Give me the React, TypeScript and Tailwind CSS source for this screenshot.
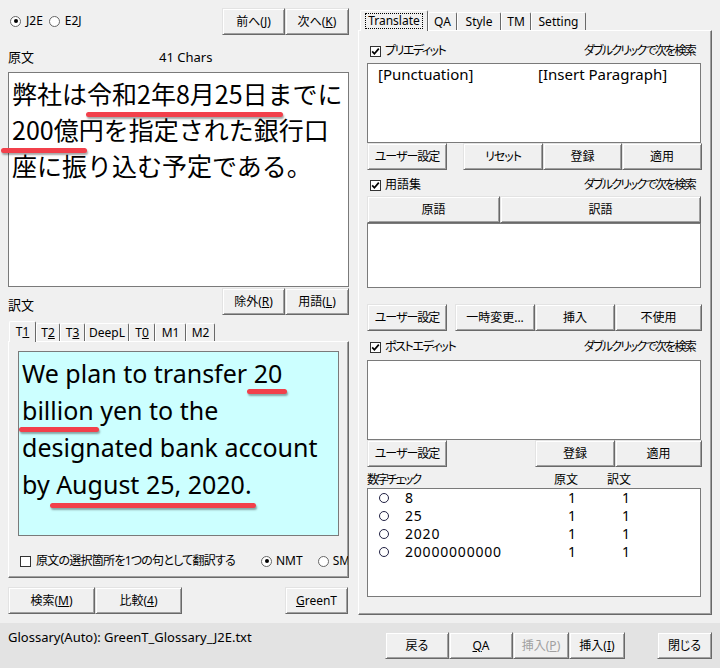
import React from 'react';

const ui = "font-['Noto_Sans','Noto_Sans_CJK_JP',sans-serif]";

type BtnProps = { className?: string; disabled?: boolean; children: React.ReactNode };

const Btn = ({ className = '', disabled = false, children }: BtnProps) => (
  <div
    className={`flex items-center justify-center h-[27px] shrink-0 bg-[#f0f0f0] border border-t-[#e3e3e3] border-l-[#e3e3e3] border-r-[#696969] border-b-[#696969] shadow-[inset_1px_1px_0_#ffffff,inset_-1px_-1px_0_#a0a0a0] text-[12px] leading-[16px] ${disabled ? 'text-[#a0a0a0]' : 'text-black'} ${className}`}
  >
    {children}
  </div>
);

const Check = ({ checked = false }: { checked?: boolean }) => (
  <span className="w-[11px] h-[11px] shrink-0 border border-[#333333] bg-white flex items-center justify-center">
    {checked && (
      <svg width="9" height="9" viewBox="0 0 9 9">
        <path d="M1.2 4.4 L3.4 6.8 L7.8 1.6" stroke="#000" strokeWidth="1.7" fill="none" />
      </svg>
    )}
  </span>
);

const Radio = ({ on = false }: { on?: boolean }) => (
  <span className="w-[11px] h-[11px] shrink-0 rounded-full border border-[#666666] bg-white flex items-center justify-center">
    {on && <span className="w-[4px] h-[4px] rounded-full bg-black" />}
  </span>
);

type TabProps = { active?: boolean; className?: string; children: React.ReactNode };

const Tab = ({ active = false, className = '', children }: TabProps) => (
  <div
    className={`flex items-center justify-center shrink-0 bg-[#f0f0f0] border-t border-l border-r border-t-white border-l-white border-r-[#696969] rounded-t-[2px] text-[12px] leading-[14px] ${
      active ? 'relative z-10 -mb-px h-[21px]' : 'h-[18px]'
    } ${className}`}
  >
    {children}
  </div>
);

const Mark = ({ className }: { className: string }) => (
  <div className={`absolute h-[5px] rounded-full bg-[#f2404b] shadow-[1px_2px_2px_rgba(0,0,0,0.35)] ${className}`} />
);

const panel =
  'bg-[#f0f0f0] border border-t-white border-l-white border-r-[#696969] border-b-[#696969] shadow-[inset_-1px_-1px_0_#a0a0a0]';

const counts = ['8', '25', '2020', '20000000000'];

const Hint = () => <span className="ml-auto mr-[7px] tracking-[-1.7px]">ダブルクリックで次を検索</span>;

export default function App() {
  return (
    <div className={`relative w-[720px] h-[668px] bg-[#f0f0f0] flex flex-col text-black ${ui} [font-feature-settings:'palt']`}>
      <div className="h-[623px] flex">
        {/* left column */}
        <div className="w-[352px] pl-[8px] pr-[3px] flex flex-col">
          <div className="mt-[8px] h-[27px] flex items-start">
            <div className="mt-[7px] h-[12px] flex items-center text-[12px]">
              <span className="ml-[2px]"><Radio on /></span>
              <span className="ml-[5px]">J2E</span>
              <span className="ml-[6px]"><Radio /></span>
              <span className="ml-[5px]">E2J</span>
            </div>
            <div className="ml-auto flex">
              <Btn className="w-[63px]">前へ(<u>J</u>)</Btn>
              <Btn className="w-[64px]">次へ(<u>K</u>)</Btn>
            </div>
          </div>

          <div className="mt-[14px] h-[16px] flex items-center text-[13px] leading-[16px]">
            <span className="w-[151px]">原文</span>
            <span>41 Chars</span>
          </div>

          <div className="mt-[7px] h-[215px] bg-white border border-[#7a7a7a] pl-[3px] pt-[2px] text-[25px] leading-[36px] font-['Noto_Sans_CJK_JP',sans-serif] [font-feature-settings:normal]">
            弊社は令和2年8月25日までに
            <br />
            200億円を指定された銀行口
            <br />
            座に振り込む予定である。
          </div>

          <div className="mt-[1px] h-[27px] flex items-end">
            <span className="mb-[2px] text-[13px] leading-[16px]">訳文</span>
            <div className="ml-auto flex">
              <Btn className="w-[63px]">除外(<u>R</u>)</Btn>
              <Btn className="w-[64px]">用語(<u>L</u>)</Btn>
            </div>
          </div>

          <div className="mt-[7px] h-[19px] pl-[1px] flex items-end">
            <Tab active className="w-[27px]">T<u>1</u></Tab>
            <Tab className="w-[24px]">T<u>2</u></Tab>
            <Tab className="w-[25px]">T<u>3</u></Tab>
            <Tab className="w-[44px]">DeepL</Tab>
            <Tab className="w-[26px]">T<u>0</u></Tab>
            <Tab className="w-[31px]">M1</Tab>
            <Tab className="w-[29px]">M2</Tab>
          </div>

          <div className={`h-[237px] overflow-hidden flex flex-col ${panel}`}>
            <div className="ml-[9px] mt-[9px] w-[321px] h-[185px] shrink-0 bg-[#ccffff] border border-[#7a7a7a] pl-[3px] pt-[3px] text-[25px] leading-[37px] font-['Noto_Sans',sans-serif]">
              We plan to transfer 20
              <br />
              billion yen to the
              <br />
              designated bank account
              <br />
              by August 25, 2020.
            </div>
            <div className="mt-[17px] h-[16px] flex items-center text-[12px] whitespace-nowrap">
              <span className="ml-[11px]"><Check /></span>
              <span className="ml-[5px] w-[225px] shrink-0 tracking-[-0.75px]">原文の選択箇所を1つの句として翻訳する</span>
              <Radio on />
              <span className="ml-[4px]">NMT</span>
              <span className="ml-[15px]"><Radio /></span>
              <span className="ml-[4px]">SMT</span>
            </div>
          </div>

          <div className="mt-[9px] flex">
            <Btn className="w-[87px]">検索(<u>M</u>)</Btn>
            <Btn className="w-[87px]">比較(<u>4</u>)</Btn>
            <Btn className="ml-auto mr-[1px] w-[63px]"><u>G</u>reenT</Btn>
          </div>
        </div>

        {/* right column */}
        <div className="ml-[6px] w-[354px] flex flex-col">
          <div className="mt-[9px] h-[21px] pl-[2px] flex items-end">
            <Tab active className="w-[68px]">
              <span className="px-[2px] border border-dotted border-black leading-[14px]">Translate</span>
            </Tab>
            <Tab className="w-[29px]">QA</Tab>
            <Tab className="w-[44px]">Style</Tab>
            <Tab className="w-[30px]">TM</Tab>
            <Tab className="w-[55px]">Setting</Tab>
          </div>

          <div className={`h-[585px] pl-[8px] pr-[9px] flex flex-col text-[12px] ${panel}`}>
            <div className="mt-[12px] h-[16px] flex items-center">
              <span className="ml-[3px]"><Check checked /></span>
              <span className="ml-[4px] tracking-[-1.5px]">プリエディット</span>
              <Hint />
            </div>
            <div className="mt-[4px] w-[334px] h-[80px] bg-white border border-[#7a7a7a] flex text-[15px] leading-[20px]">
              <span className="ml-[10px] w-[160px]">[Punctuation]</span>
              <span>[Insert Paragraph]</span>
            </div>
            <div className="flex">
              <Btn className="w-[80px] tracking-[-1px]">ユーザー設定</Btn>
              <Btn className="ml-[16px] w-[80px] tracking-[-1px]">リセット</Btn>
              <Btn className="w-[79px]">登録</Btn>
              <Btn className="w-[80px]">適用</Btn>
            </div>

            <div className="mt-[7px] h-[16px] flex items-center">
              <span className="ml-[3px]"><Check checked /></span>
              <span className="ml-[4px]">用語集</span>
              <Hint />
            </div>
            <div className="mt-[3px] w-[334px] flex">
              <Btn className="h-[26px] w-[133px]">原語</Btn>
              <Btn className="h-[26px] flex-1">訳語</Btn>
            </div>
            <div className="w-[334px] h-[65px] bg-white border border-[#7a7a7a]" />
            <div className="mt-[16px] flex">
              <Btn className="w-[80px] tracking-[-1px]">ユーザー設定</Btn>
              <Btn className="ml-[8px] w-[80px]">一時変更...</Btn>
              <Btn className="w-[80px]">挿入</Btn>
              <Btn className="w-[87px]">不使用</Btn>
            </div>

            <div className="mt-[8px] h-[16px] flex items-center">
              <span className="ml-[3px]"><Check checked /></span>
              <span className="ml-[4px] tracking-[-1.4px]">ポストエディット</span>
              <Hint />
            </div>
            <div className="mt-[5px] w-[334px] h-[80px] bg-white border border-[#7a7a7a]" />
            <div className="flex">
              <Btn className="w-[80px] tracking-[-1px]">ユーザー設定</Btn>
              <Btn className="ml-[88px] w-[80px]">登録</Btn>
              <Btn className="w-[87px]">適用</Btn>
            </div>

            <div className="mt-[5px] h-[16px] flex items-center">
              <span className="w-[187px] tracking-[-2px]">数字チェック</span>
              <span className="w-[53px]">原文</span>
              <span>訳文</span>
            </div>
            <div className="w-[334px] h-[109px] bg-white border border-[#7a7a7a] flex flex-col text-[14px] leading-[18px]">
              {counts.map((n) => (
                <div key={n} className="h-[18px] shrink-0 flex items-center">
                  <span className="ml-[11px] w-[10px] h-[10px] rounded-full border border-[#222244]" />
                  <span className="ml-[16px] w-[163px] tracking-[0.8px]">{n}</span>
                  <span className="w-[54px]">1</span>
                  <span>1</span>
                </div>
              ))}
            </div>
          </div>
        </div>
      </div>

      {/* status strip */}
      <div className="h-[45px] bg-[#e3e3e3] flex items-start">
        <div className="ml-[8px] mt-[6px] text-[13px] leading-[16px]">Glossary(Auto): GreenT_Glossary_J2E.txt</div>
        <div className="ml-auto mr-[8px] mt-[9px] flex">
          <Btn className="w-[64px]">戻る</Btn>
          <Btn className="w-[64px]"><u>Q</u>A</Btn>
          <Btn disabled className="w-[56px]">挿入(<u>P</u>)</Btn>
          <Btn className="w-[56px]">挿入(<u>I</u>)</Btn>
          <Btn className="ml-[32px] w-[55px]">閉じる</Btn>
        </div>
      </div>

      {/* hand-drawn highlight strokes */}
      <Mark className="left-[86px] top-[112px] w-[197px]" />
      <Mark className="left-[1px] top-[148px] w-[86px]" />
      <Mark className="left-[247px] top-[389px] w-[40px]" />
      <Mark className="left-[19px] top-[427px] w-[80px]" />
      <Mark className="left-[50px] top-[503px] w-[206px]" />
    </div>
  );
}
